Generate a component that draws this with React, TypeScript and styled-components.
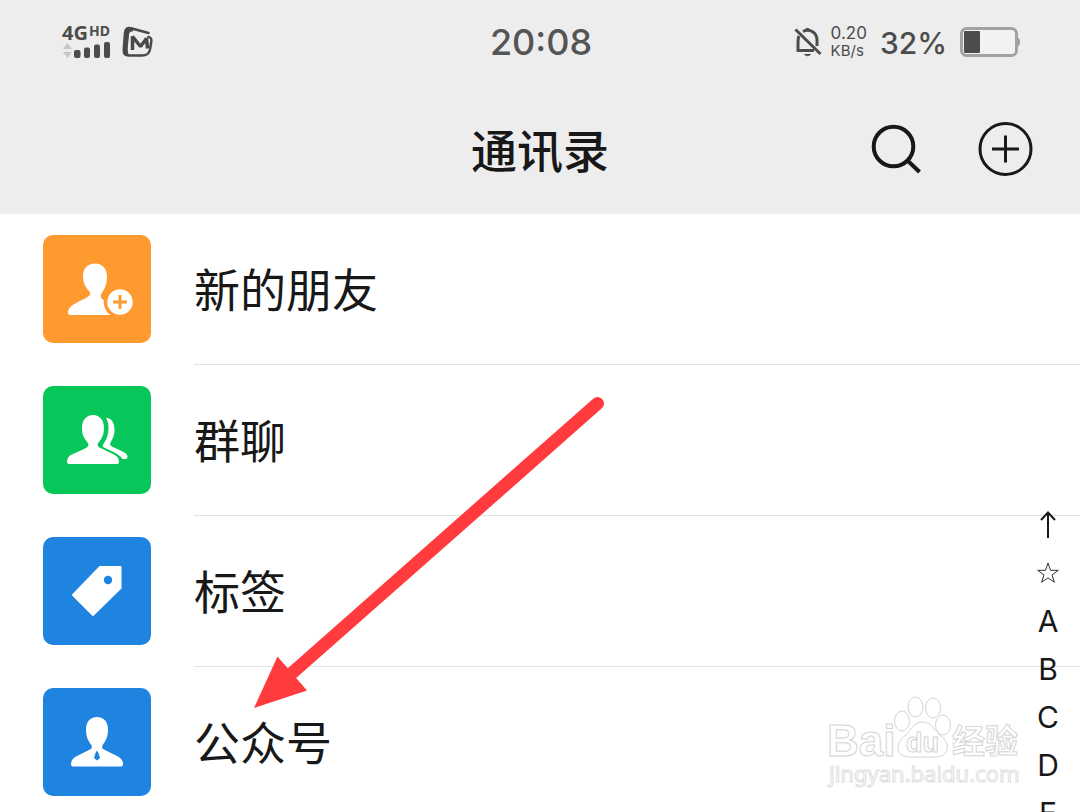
import React from "react";
import styled, { createGlobalStyle } from "styled-components";

const GlobalStyle = createGlobalStyle`
  * { box-sizing: border-box; }
  body {
    margin: 0;
    background: #fff;
    color: #181818;
    font-family: Inter, "Noto Sans CJK SC", sans-serif;
  }
  button { margin: 0; padding: 0; border: 0; background: none; color: inherit; font: inherit; cursor: pointer; }
  svg { display: block; flex: none; }
`;

const Screen = styled.div`
  position: relative;
  height: 100vh;
  overflow: hidden;
`;

const Header = styled.header`
  background: #ededed;
`;

const Bar = styled.div<{ $height: number; $left: number; $right: number }>`
  display: grid;
  grid-template-columns: 1fr auto 1fr;
  align-items: center;
  height: ${(p) => p.$height}px;
  padding: 0 ${(p) => p.$right}px 0 ${(p) => p.$left}px;
`;

const Group = styled.div<{ $gap: number; $end?: boolean }>`
  display: flex;
  align-items: center;
  justify-content: ${(p) => (p.$end ? "flex-end" : "flex-start")};
  gap: ${(p) => p.$gap}px;
  color: #4c4c4c;
`;

const Signal = styled.div`
  display: flex;
  flex-direction: column;
  width: 48px;
`;

const Network = styled.div`
  display: flex;
  align-items: flex-start;
  gap: 1px;
  height: 16px;
  font-family: "Noto Sans", sans-serif;
  font-weight: 700;
  font-size: 20px;
  line-height: 16px;
`;

const NetworkTag = styled.span`
  font-size: 14px;
  line-height: 12px;
`;

const Clock = styled.time`
  color: #555;
  font-size: 36px;
  font-weight: 500;
  line-height: 44px;
`;

const Speed = styled.div`
  display: flex;
  flex-direction: column;
  font-size: 17px;
  line-height: 17px;
`;

const SpeedUnit = styled.span`
  font-size: 15px;
`;

const Percent = styled.span`
  padding-top: 2px;
  font-size: 30px;
  font-weight: 500;
  line-height: 36px;
`;

const Title = styled.h1`
  grid-column: 2;
  margin: 0;
  padding-top: 4px;
  font-size: 46px;
  font-weight: 500;
  line-height: 60px;
`;

const IconButton = styled.button`
  display: flex;
  color: #181818;
`;

const List = styled.ul`
  margin: 0;
  padding: 0;
  list-style: none;
`;

const Row = styled.button`
  display: flex;
  align-items: stretch;
  gap: 43px;
  width: 100%;
  padding-left: 43px;
  text-align: left;
`;

const Tile = styled.span<{ $color: string }>`
  flex: none;
  width: 108px;
  height: 108px;
  margin: 21px 0 22px;
  border-radius: 10px;
  background: ${(p) => p.$color};
`;

const Label = styled.span`
  display: flex;
  flex: 1;
  align-items: center;
  padding-top: 2px;
  border-bottom: 1px solid #e2e2e2;
  font-size: 46px;
  line-height: 60px;
`;

const IndexNav = styled.nav`
  position: absolute;
  top: 501px;
  right: 8px;
  display: flex;
  flex-direction: column;
  width: 48px;
`;

const IndexItem = styled.button`
  display: flex;
  align-items: center;
  justify-content: center;
  height: 48px;
  font-size: 30px;
  line-height: 48px;
`;

const Pointer = styled.svg`
  position: absolute;
  top: 390px;
  left: 250px;
  pointer-events: none;
`;

const Watermark = styled.svg`
  position: absolute;
  top: 690px;
  right: 50px;
  pointer-events: none;
`;

const SignalBars = () => (
  <svg width="48" height="18" viewBox="0 0 48 18" aria-hidden="true">
    <path d="M1 8 5.500 2 10 8ZM1 11h9l-4.500 6Z" fill="#c6c6c6" />
    <g fill="#4c4c4c">
      <rect x="12" y="9" width="6.500" height="8" rx="2" />
      <rect x="22" y="6.500" width="6" height="10.500" rx="2" />
      <rect x="32" y="3.500" width="6" height="13.500" rx="2" />
      <rect x="42" y="1" width="6" height="16" rx="2" />
    </g>
  </svg>
);

const CarrierIcon = () => (
  <svg width="32" height="32" viewBox="0 0 32 32" fill="none" stroke="#484848" aria-hidden="true">
    <path d="M26.500 7 9 2.200C5 1.300 3.500 3 3 7L1.800 23c-.3 5 1.200 6.500 5.200 6.500h13c5 0 7-1.500 8-6l1.300-8c.4-3-.3-4-3-4.500" strokeWidth="2.500" strokeLinecap="round" strokeLinejoin="round" />
    <path d="M8 2C4 2 3.300 4 3 8L1.500 23c-.3 4 .5 6 5 6.500C5.500 27 5 25 5.300 21L6.500 9C6.700 6 8 4.500 11 5Z" fill="#484848" strokeWidth="1" />
    <path d="M10.500 24V10.500L18.500 20.500 24.500 12.500 25.500 22.500" strokeWidth="3.500" strokeLinejoin="bevel" />
  </svg>
);

const MutedBell = () => (
  <svg width="28" height="32" viewBox="0 0 28 32" fill="none" stroke="#4c4c4c" strokeWidth="3" aria-hidden="true">
    <path d="M1.500 3.500 26.500 28" />
    <path d="M5 10C4 12 4 14 4 16v8.500H20M9 5.500C16 2 23 7 23 14v6" />
    <path d="M11 3.500Q13.500 1 16 3.500M10.500 28.500Q13.500 31 16.500 28.500Z" fill="#4c4c4c" strokeWidth="1" />
  </svg>
);

const Battery = () => (
  <svg width="60" height="32" viewBox="0 0 60 32" aria-hidden="true">
    <rect x="1.500" y="2.500" width="55" height="27" rx="5" fill="#f2f2f2" stroke="#a2a2a2" strokeWidth="3" />
    <rect x="4" y="5" width="16" height="22" rx="1" fill="#4c4c4c" />
    <path d="M58 11.500q2 1 2 4.500t-2 4.500Z" fill="#999" />
  </svg>
);

const SearchIcon = () => (
  <svg width="56" height="56" viewBox="0 0 56 56" fill="none" stroke="#181818" strokeWidth="4" aria-hidden="true">
    <circle cx="25.500" cy="25.500" r="19.800" />
    <path d="m39.500 39.500 12 11.500" />
  </svg>
);

const AddIcon = () => (
  <svg width="56" height="56" viewBox="0 0 56 56" fill="none" stroke="#181818" strokeWidth="3" aria-hidden="true">
    <circle cx="27.500" cy="28" r="25.500" />
    <path d="M27.500 14.500v27M14 28h27" />
  </svg>
);

const NewFriendIcon = () => (
  <svg width="108" height="108" viewBox="0 0 108 108" aria-hidden="true">
    <path d="M52 28.500c7.500 0 12 5.500 12 13 0 8-2.500 12.500-5 16-1.500 2.500-1.500 5 0 6.500 2 2 8 3 13 5 8 4 8 6 8 11H27.500Q25 80 25 78c0-5 4-8 10-11 5-3 9-4 11-6 2-1.500 1.500-3 0-5-3.500-4-6-8-6-15 0-7.500 4.500-12.500 12-12.500Z" fill="#fff" />
    <circle cx="77" cy="67" r="14.500" fill="#fff" stroke="#ff9a30" strokeWidth="3.500" />
    <path d="M66 80.500h25v3H66Z" fill="#ff9a30" />
    <path d="M77 60v14M70 67h14" stroke="#ff9a30" strokeWidth="3" />
  </svg>
);

const GroupIcon = () => (
  <svg width="108" height="108" viewBox="0 0 108 108" fill="#fff" aria-hidden="true">
    <path d="M50 29c7 0 11 5.500 11 13 0 7-2.500 11-5.500 14.500-1.500 2-1 4 1 5L70 68c5 2.500 6 5 6 8q0 2-2 2H26q-2 0-2-2c0-4 2-6.500 6-8l12-5.500c4-2 4-3.500 2.500-6C41 52 39 49 39 42c0-7.500 4-13 11-13Z" />
    <path d="M63 32C68.500 31.500 71.500 37 71.500 44c0 5-1.500 8-3.500 11.500-1.500 2.500-1 3.500 1 5L79.500 65.500c4 2 5 3.500 5 5.500q0 2-2 2h-3c-2-3-6-5.500-9-7l-9.500-4.500c-2-1-1.500-2.500 0-4.500 3-4 4.500-9 4.500-14.500 0-4.500-.7-7.500-2.500-10.500Z" />
  </svg>
);

const TagIcon = () => (
  <svg width="108" height="108" viewBox="0 0 108 108" aria-hidden="true">
    <path d="M57 30H77.500V51L50 78 30 58Z" fill="#fff" stroke="#fff" strokeWidth="2" strokeLinejoin="round" />
    <circle cx="65" cy="43" r="4.200" fill="#1f84e0" />
  </svg>
);

const OfficialIcon = () => (
  <svg width="108" height="108" viewBox="0 0 108 108" aria-hidden="true">
    <path d="M54 29c7 0 11 5 11 12.500 0 7-2 11-5 15-1.500 2.500-1 4 1 5L74 68c4 2 6 4.500 6 8q0 2.500-2 2.500H30q-2 0-2-2.500c0-3.500 2-6 6-8l13-6.500c2-1 2.500-2.500 1-5-3-4-5-8-5-15C43 34 47 29 54 29Z" fill="#fff" />
    <path d="M54 62.500 55.500 65 57 70l-3 2.500L51 70l1.500-5Z" fill="#1f84e0" />
  </svg>
);

const UpArrow = () => (
  <svg width="24" height="30" viewBox="0 0 24 30" fill="none" stroke="#181818" strokeWidth="2" aria-hidden="true">
    <path d="M12 28V3M5 10l7-7.500L19 10" />
  </svg>
);

const StarIcon = () => (
  <svg width="24" height="24" viewBox="0 0 24 24" fill="none" stroke="#333" aria-hidden="true">
    <path d="m12 2 2.500 7.300h7.800l-6.300 4.600 2.400 7.400-6.400-4.500-6.400 4.500L8 13.900 1.700 9.300h7.800Z" />
  </svg>
);

const contacts = [
  { label: "新的朋友", color: "#ff9a30", Icon: NewFriendIcon },
  { label: "群聊", color: "#07c75b", Icon: GroupIcon },
  { label: "标签", color: "#1f84e0", Icon: TagIcon },
  { label: "公众号", color: "#1f84e0", Icon: OfficialIcon },
];

const letters = ["A", "B", "C", "D", "E"];

export default function App() {
  return (
    <Screen>
      <GlobalStyle />
      <Header>
        <Bar $height={84} $left={62} $right={60}>
          <Group $gap={12}>
            <Signal>
              <Network>
                4G<NetworkTag>HD</NetworkTag>
              </Network>
              <SignalBars />
            </Signal>
            <CarrierIcon />
          </Group>
          <Clock>20:08</Clock>
          <Group $gap={13} $end>
            <Group $gap={9}>
              <MutedBell />
              <Speed>
                <span>0.20</span>
                <SpeedUnit>KB/s</SpeedUnit>
              </Speed>
            </Group>
            <Percent>32%</Percent>
            <Battery />
          </Group>
        </Bar>
        <Bar $height={130} $left={46} $right={46}>
          <Title>通讯录</Title>
          <Group $gap={54} $end>
            <IconButton aria-label="搜索">
              <SearchIcon />
            </IconButton>
            <IconButton aria-label="添加">
              <AddIcon />
            </IconButton>
          </Group>
        </Bar>
      </Header>

      <List>
        {contacts.map(({ label, color, Icon }) => (
          <li key={label}>
            <Row>
              <Tile $color={color}>
                <Icon />
              </Tile>
              <Label>{label}</Label>
            </Row>
          </li>
        ))}
      </List>

      <Watermark width="210" height="110" viewBox="0 0 210 110" fill="#fff" stroke="#d4d4d4" role="img" aria-label="Baidu 经验">
        <g fontFamily="'Liberation Sans', sans-serif" fontWeight="700">
          <text x="7" y="66" fontSize="44">Bai</text>
          <ellipse cx="82" cy="31" rx="7.500" ry="10" />
          <ellipse cx="95.500" cy="17" rx="7.500" ry="10" />
          <ellipse cx="113" cy="18" rx="7.500" ry="10" />
          <ellipse cx="123" cy="35" rx="7.500" ry="10" />
          <path d="M102 32c9 0 12 7 17 12 7 6 9 10 8 15-1 6-6 8-12 8H90c-7 0-12-3-12-9 0-5 3-9 8-13 5-5 8-13 16-13Z" />
          <text x="86" y="62" fontSize="27">du</text>
        </g>
        <text x="132" y="63" fontSize="33" fontWeight="700" fontFamily="'Noto Sans CJK SC', sans-serif">经验</text>
        <text x="9" y="92" fontSize="22" stroke="#dedede" fontFamily="'Noto Sans', sans-serif">jingyan.baidu.com</text>
      </Watermark>

      <IndexNav aria-label="索引">
        <IndexItem aria-label="顶部">
          <UpArrow />
        </IndexItem>
        <IndexItem aria-label="星标">
          <StarIcon />
        </IndexItem>
        {letters.map((letter) => (
          <IndexItem key={letter}>{letter}</IndexItem>
        ))}
      </IndexNav>

      <Pointer width="360" height="324" viewBox="0 0 360 324" fill="#ff3b3d" aria-hidden="true">
        <path d="M347.500 13.500 41 284" stroke="#ff3b3d" strokeWidth="13" strokeLinecap="round" />
        <path d="M4 318 27.500 266.500 57 300.500Z" />
      </Pointer>
    </Screen>
  );
}
